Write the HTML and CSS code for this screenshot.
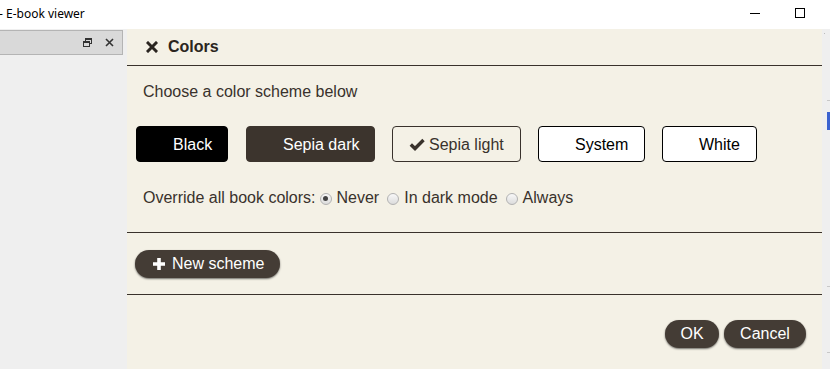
FILE: index.html
```html
<!DOCTYPE html>
<html>
<head>
<meta charset="utf-8">
<link rel="stylesheet" href="styles.css">
</head>
<body>
<div class="titlebar">
  <span class="title">- E-book viewer</span>
  <div class="winctl">
    <span class="minimize"></span>
    <span class="maximize"></span>
  </div>
</div>
<div class="main">
  <aside class="sidepanel">
    <div class="sidehead">
      <svg class="ico-restore" width="9" height="9" viewBox="0 0 9 9"><rect x="2.5" y="0.5" width="6" height="5" fill="none" stroke="#333" stroke-width="1"/><rect x="2.5" y="0.5" width="6" height="1.5" fill="#333"/><rect x="0.5" y="3.5" width="6" height="5" fill="#d9d9d9" stroke="#333" stroke-width="1"/><rect x="0.5" y="3.5" width="6" height="1.5" fill="#333"/></svg>
      <svg class="ico-close" width="9" height="9" viewBox="0 0 9 9"><path d="M1 1L8 8M8 1L1 8" stroke="#333" stroke-width="1.6"/></svg>
    </div>
  </aside>
  <section class="dialog">
    <header class="dhead">
      <svg class="xicon" width="12" height="12" viewBox="0 0 12 12"><path d="M2 2L10 10M10 2L2 10" stroke="#2a2520" stroke-width="3" stroke-linecap="square"/></svg>
      <span class="dtitle">Colors</span>
    </header>
    <div class="sec sec1">
      <p class="lead">Choose a color scheme below</p>
      <div class="schemes">
        <button class="scheme s-black"><span class="chk"></span>Black</button>
        <button class="scheme s-sdark"><span class="chk"></span>Sepia dark</button>
        <button class="scheme s-slight"><span class="chk"><svg width="16" height="13" viewBox="0 0 16 13"><path d="M1.8 6.5L6 10.5L14.5 2" fill="none" stroke="#39322c" stroke-width="3.4"/></svg></span>Sepia light</button>
        <button class="scheme s-system"><span class="chk"></span>System</button>
        <button class="scheme s-white"><span class="chk"></span>White</button>
      </div>
      <div class="override">
        <span>Override all book colors:</span>
        <label class="opt"><span class="radio on"></span>Never</label>
        <label class="opt"><span class="radio"></span>In dark mode</label>
        <label class="opt"><span class="radio"></span>Always</label>
      </div>
    </div>
    <div class="sec sec2">
      <button class="pill newbtn"><svg width="12" height="12" viewBox="0 0 12 12"><path d="M6 0V12M0 6H12" stroke="#fff" stroke-width="3.6"/></svg>New scheme</button>
    </div>
    <div class="sec sec3">
      <button class="pill">OK</button>
      <button class="pill">Cancel</button>
    </div>
  </section>
  <div class="rightstrip">
    <span class="dot"></span>
    <span class="tick t1"></span>
    <span class="blue"></span>
    <span class="tick t2"></span>
    <span class="tick t3"></span>
  </div>
</div>
</body>
</html>
```
FILE: styles.css
```css
* { box-sizing: border-box; }
html, body { margin: 0; padding: 0; }
body {
  width: 830px;
  height: 369px;
  overflow: hidden;
  font-family: "Liberation Sans", Arial, sans-serif;
  font-size: 16px;
  color: #39322c;
  background: #fff;
}
.titlebar {
  height: 29px;
  background: #fff;
  display: flex;
  align-items: center;
  justify-content: space-between;
}
.title {
  font-family: "Noto Sans", "Open Sans", sans-serif;
  font-size: 12px;
  color: #000;
  margin-left: -1px;
  margin-top: -3px;
}
.winctl {
  display: flex;
  align-items: center;
  margin-right: 25px;
  margin-top: -3px;
}
.minimize {
  width: 10px;
  height: 1px;
  background: #000;
  margin-right: 35px;
}
.maximize {
  width: 10px;
  height: 10px;
  border: 1px solid #000;
}
.main {
  display: flex;
  height: 340px;
}
.sidepanel {
  width: 127px;
  background: #efefef;
  padding-top: 1px;
}
.sidehead {
  width: 123px;
  height: 25px;
  background: #d9d9d9;
  border: 1px solid #b4b4b4;
  border-left: none;
  display: flex;
  align-items: center;
  justify-content: flex-end;
  padding-right: 8px;
}
.ico-restore { margin-right: 13px; }
.dialog {
  flex: 1;
  background: #f4f1e6;
  display: flex;
  flex-direction: column;
}
.dhead {
  height: 37px;
  border-bottom: 1px solid #39322c;
  display: flex;
  align-items: center;
  padding-left: 19px;
  padding-bottom: 1px;
}
.xicon { margin-right: 10px; }
.dtitle {
  font-weight: bold;
  color: #2a2520;
}
.sec {
  border-bottom: 1px solid #39322c;
}
.sec1 {
  padding: 16px 0 25px 16px;
}
.lead {
  margin: 0;
  line-height: 19px;
}
.schemes {
  display: flex;
  gap: 17px;
  margin: 25px 0 0 -7px;
}
.scheme {
  font-family: inherit;
  font-size: 16px;
  white-space: nowrap;
  height: 36px;
  border-radius: 4px;
  border: 1px solid #39322c;
  background: #f4f1e6;
  color: #39322c;
  display: flex;
  align-items: center;
  padding: 1px 15px 0 16px;
  cursor: pointer;
}
.chk {
  width: 16px;
  height: 16px;
  margin-right: 4px;
  display: flex;
  align-items: center;
  flex: none;
}
.s-black { background: #000; color: #fff; border-color: #000; width: 92px; margin-right: 1px; }
.s-sdark { background: #3c342d; color: #fff; border-color: #3c342d; width: 129px; }
.s-slight { width: 129px; }
.s-system { background: #fff; color: #000; border-color: #000; width: 107px; }
.s-white { background: #fff; color: #000; border-color: #000; width: 95px; }
.override {
  margin-top: 26px;
  display: flex;
  align-items: center;
  line-height: 19px;
  white-space: nowrap;
}
.opt {
  display: flex;
  align-items: center;
  margin-left: 8px;
}
.opt:first-of-type { margin-left: 4px; }
.radio {
  width: 12px;
  height: 12px;
  border-radius: 50%;
  border: 1px solid #b2b2b2;
  background: linear-gradient(#f8f8f8, #dcdcdc);
  margin-right: 5px;
  margin-top: 2px;
  position: relative;
}
.radio.on::after {
  content: "";
  position: absolute;
  left: 2.5px;
  top: 2.5px;
  width: 5px;
  height: 5px;
  border-radius: 50%;
  background: #444;
}
.sec2 {
  padding: 17px 0 16px 8px;
}
.pill {
  font-family: inherit;
  font-size: 16px;
  white-space: nowrap;
  height: 28px;
  border: none;
  border-radius: 14px;
  background: #443c35;
  color: #fff;
  box-shadow: 0 1px 2px rgba(0,0,0,0.55);
  padding: 0 16px;
  display: inline-flex;
  align-items: center;
  cursor: pointer;
}
.newbtn {
  width: 145px;
  padding-left: 18px;
}
.newbtn svg { margin-right: 7px; flex: none; }
.sec3 {
  border-bottom: none;
  display: flex;
  justify-content: flex-end;
  gap: 5px;
  padding: 25px 16px 0 0;
}
.sec3 .pill:first-child { width: 54px; justify-content: center; }
.sec3 .pill:last-child { width: 82px; justify-content: center; }
.rightstrip {
  width: 8px;
  background: #efefef;
  display: flex;
  flex-direction: column;
  align-items: flex-end;
}
.dot { width: 1px; height: 1px; background: #bbb; margin: 4px 5px 0 0; }
.tick { width: 3px; height: 1px; background: #c8c8c8; }
.t1 { margin-top: 66px; }
.blue { width: 3px; height: 18px; background: #3a62d0; margin-top: 11px; }
.t2 { margin-top: 156px; }
.t3 { margin-top: 65px; }
```
